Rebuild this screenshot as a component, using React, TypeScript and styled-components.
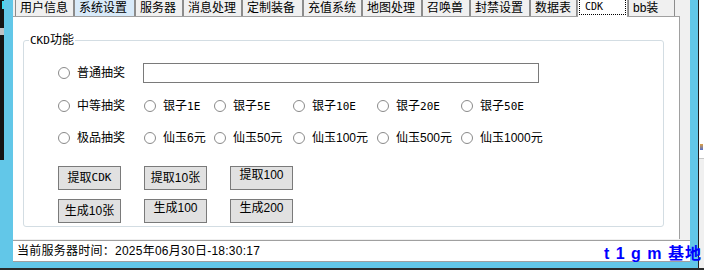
import React from "react";
import styled, { createGlobalStyle } from "styled-components";

const Global = createGlobalStyle`
  html, body { margin: 0; padding: 0; background: #1b1b1b; }
  body {
    font-family: "Liberation Sans", "Noto Sans CJK SC", sans-serif;
    font-size: 12px;
    color: #000;
  }
  * { box-sizing: border-box; }
`;

const CYAN = "#62c7e8";
const SANS = `"Liberation Sans", "Noto Sans CJK SC", sans-serif`;

const Screen = styled.div`
  position: relative;
  width: 704px;
  height: 270px;
  display: flex;
  flex-direction: column;
  overflow: hidden;
  background: #1b1b1b;
`;

const MainRow = styled.div`
  display: flex;
  height: 268px;
`;

const BottomEdge = styled.div`
  height: 2px;
  background: #2a2a2a;
`;

const LeftEdge = styled.div`
  width: 4px;
  display: flex;
  flex-direction: column;
`;

const DarkTop = styled.div`
  height: 160px;
  background: #141414;
  display: flex;
  flex-direction: column;
  align-items: flex-end;
`;

const CyanBit = styled.div`
  width: 2px;
  height: 8px;
  margin-top: 1px;
  background: #3fd8f0;
`;

const GrayBit = styled.div`
  align-self: stretch;
  margin-top: 19px;
  height: 7px;
  background: #bcc2c6;
`;

const CyanFill = styled.div`
  flex: 1;
  background: ${CYAN};
`;

const Frame = styled.div`
  width: 694px;
  background: ${CYAN};
  padding: 0 8px 6px 9px;
  display: flex;
`;

const Dialog = styled.div`
  flex: 1;
  background: #f0f0f0;
  display: flex;
  flex-direction: column;
`;

const RightDark = styled.div`
  width: 1px;
  background: #202020;
`;

const RightEdge = styled.div`
  width: 5px;
  display: flex;
  flex-direction: column;
  background: #ffffff;
`;

const RightWhite = styled.div`
  height: 144px;
`;

const RightArtifact = styled.div`
  height: 6px;
  width: 3px;
  margin-left: 1px;
  background: linear-gradient(#e0a040, #5070d0);
`;

const RightGray = styled.div`
  margin-top: 8px;
  flex: 1;
  background: #f0f0f0;
  border-top: 1px solid #c8c8c8;
`;

const TabStrip = styled.div`
  height: 16px;
  display: flex;
  align-items: flex-start;
  padding-left: 2px;
`;

const Tab = styled.div<{ $w: number; $active?: boolean; $hover?: boolean }>`
  position: relative;
  width: ${(p) => p.$w}px;
  height: ${(p) => (p.$active ? 17 : 16)}px;
  margin-bottom: ${(p) => (p.$active ? -1 : 0)}px;
  z-index: ${(p) => (p.$active ? 1 : 0)};
  border: 1px solid ${(p) => (p.$active ? "#a0a0a0" : "#8c8c8c")};
  border-top: none;
  border-bottom: none;
  background: ${(p) => (p.$active ? "#ffffff" : p.$hover ? "#d8eaf9" : "#f0f0f0")};
  padding-left: ${(p) => (p.$active ? 1 : 4)}px;
  font: 12px/16px ${SANS};
  white-space: nowrap;
  overflow: hidden;
`;

const FocusBox = styled.div`
  width: 47px;
  height: 15px;
  border: 1px dotted #000;
  border-top: none;
  padding-left: 5px;
  font: 10px/13px "DejaVu Sans Mono", "Liberation Mono", monospace;
`;

const Mono = styled.span<{ $size?: number }>`
  font-family: "DejaVu Sans Mono", "Liberation Mono", monospace;
  font-size: ${(p) => p.$size ?? 11}px;
`;

const Panel = styled.div`
  width: 667px;
  height: 223px;
  background: #ffffff;
  border-top: 1px solid #a0a0a0;
  border-right: 1px solid #a0a0a0;
  display: flex;
  flex-direction: column;
`;

const GroupBox = styled.fieldset`
  margin: 16px 0 0 10px;
  width: 641px;
  height: 194px;
  padding: 0;
  border: 1px solid #d3dde3;
  border-radius: 3px;
  min-width: 0;
`;

const Legend = styled.legend`
  margin-left: 5px;
  padding: 0 1px;
  font: 12px/14px ${SANS};
  color: #000;
`;

const GroupBody = styled.div`
  padding-left: 34px;
  display: flex;
  flex-direction: column;
`;

const OptionRow = styled.div<{ $top: number }>`
  margin-top: ${(p) => p.$top}px;
  height: 20px;
  display: grid;
  grid-template-columns: 86px 70px 79px 84px 84px 1fr;
  align-items: center;
`;

const FirstRow = styled.div`
  margin-top: 15px;
  height: 20px;
  display: flex;
  align-items: center;
`;

const RadioOption = styled.label<{ $w?: number }>`
  display: flex;
  align-items: center;
  gap: 7px;
  ${(p) => (p.$w ? `width: ${p.$w}px;` : "")}
  font: 12px/14px ${SANS};
  white-space: nowrap;
`;

const RadioDot = styled.span`
  width: 12px;
  height: 12px;
  flex: none;
  border-radius: 50%;
  border: 1px solid #8a8a8a;
  background: #ffffff;
`;

const TextBox = styled.div`
  width: 396px;
  height: 20px;
  border: 1px solid #7a7a7a;
  background: #ffffff;
`;

const ButtonGrid = styled.div`
  margin-top: 18px;
  display: grid;
  grid-template-columns: repeat(3, 63px);
  column-gap: 23px;
  row-gap: 9px;
`;

const Button = styled.div<{ $lift?: boolean }>`
  height: 24px;
  border: 1px solid #7a7a7a;
  background: #e1e1e1;
  display: flex;
  align-items: center;
  justify-content: center;
  padding-bottom: ${(p) => (p.$lift ? 6 : 0)}px;
  font: 12px/14px ${SANS};
  white-space: nowrap;
`;

const StatusGap = styled.div`
  height: 1px;
`;

const StatusBar = styled.div`
  height: 22px;
  background: #ffffff;
  border-top: 1px solid #a0a0a0;
  border-bottom: 1px solid #a0a0a0;
  padding-left: 4px;
  display: flex;
  align-items: center;
  font: 12px/14px ${SANS};
  letter-spacing: 0.25px;
`;

const Watermark = styled.div`
  position: absolute;
  left: 604px;
  top: 245px;
  font: bold 16px/18px ${SANS};
  letter-spacing: 1px;
  color: #0000ff;
  white-space: nowrap;
`;

const tabs = [
  { label: "用户信息", w: 59 },
  { label: "系统设置", w: 61, hover: true },
  { label: "服务器", w: 48 },
  { label: "消息处理", w: 59 },
  { label: "定制装备", w: 61 },
  { label: "充值系统", w: 59 },
  { label: "地图处理", w: 60 },
  { label: "召唤兽", w: 48 },
  { label: "封禁设置", w: 60 },
  { label: "数据表", w: 47 },
  { label: "CDK", w: 51, active: true },
  { label: "bb装", w: 47 },
];

const Radio: React.FC<{ children: React.ReactNode; w?: number }> = ({ children, w }) => (
  <RadioOption $w={w}>
    <RadioDot />
    <span>{children}</span>
  </RadioOption>
);

export default function App() {
  return (
    <>
      <Global />
      <Screen>
        <MainRow>
          <LeftEdge>
            <DarkTop>
              <CyanBit />
              <GrayBit />
            </DarkTop>
            <CyanFill />
          </LeftEdge>
          <Frame>
            <Dialog>
              <TabStrip>
                {tabs.map((t) => (
                  <Tab key={t.label} $w={t.w} $active={t.active} $hover={t.hover}>
                    {t.active ? <FocusBox>{t.label}</FocusBox> : t.label}
                  </Tab>
                ))}
              </TabStrip>
              <Panel>
                <GroupBox>
                  <Legend>
                    <Mono>CKD</Mono>功能
                  </Legend>
                  <GroupBody>
                    <FirstRow>
                      <Radio w={85}>普通抽奖</Radio>
                      <TextBox />
                    </FirstRow>
                    <OptionRow $top={13}>
                      <Radio>中等抽奖</Radio>
                      <Radio>
                        银子<Mono>1E</Mono>
                      </Radio>
                      <Radio>
                        银子<Mono>5E</Mono>
                      </Radio>
                      <Radio>
                        银子<Mono>10E</Mono>
                      </Radio>
                      <Radio>
                        银子<Mono>20E</Mono>
                      </Radio>
                      <Radio>
                        银子<Mono>50E</Mono>
                      </Radio>
                    </OptionRow>
                    <OptionRow $top={12}>
                      <Radio>极品抽奖</Radio>
                      <Radio>仙玉6元</Radio>
                      <Radio>仙玉50元</Radio>
                      <Radio>仙玉100元</Radio>
                      <Radio>仙玉500元</Radio>
                      <Radio>仙玉1000元</Radio>
                    </OptionRow>
                    <ButtonGrid>
                      <Button>
                        提取<Mono>CDK</Mono>
                      </Button>
                      <Button>提取10张</Button>
                      <Button $lift>提取100</Button>
                      <Button>生成10张</Button>
                      <Button $lift>生成100</Button>
                      <Button $lift>生成200</Button>
                    </ButtonGrid>
                  </GroupBody>
                </GroupBox>
              </Panel>
              <StatusGap />
              <StatusBar>当前服务器时间：2025年06月30日-18:30:17</StatusBar>
            </Dialog>
          </Frame>
          <RightDark />
          <RightEdge>
            <RightWhite />
            <RightArtifact />
            <RightGray />
          </RightEdge>
        </MainRow>
        <BottomEdge />
        <Watermark>t 1 g m 基地</Watermark>
      </Screen>
    </>
  );
}
